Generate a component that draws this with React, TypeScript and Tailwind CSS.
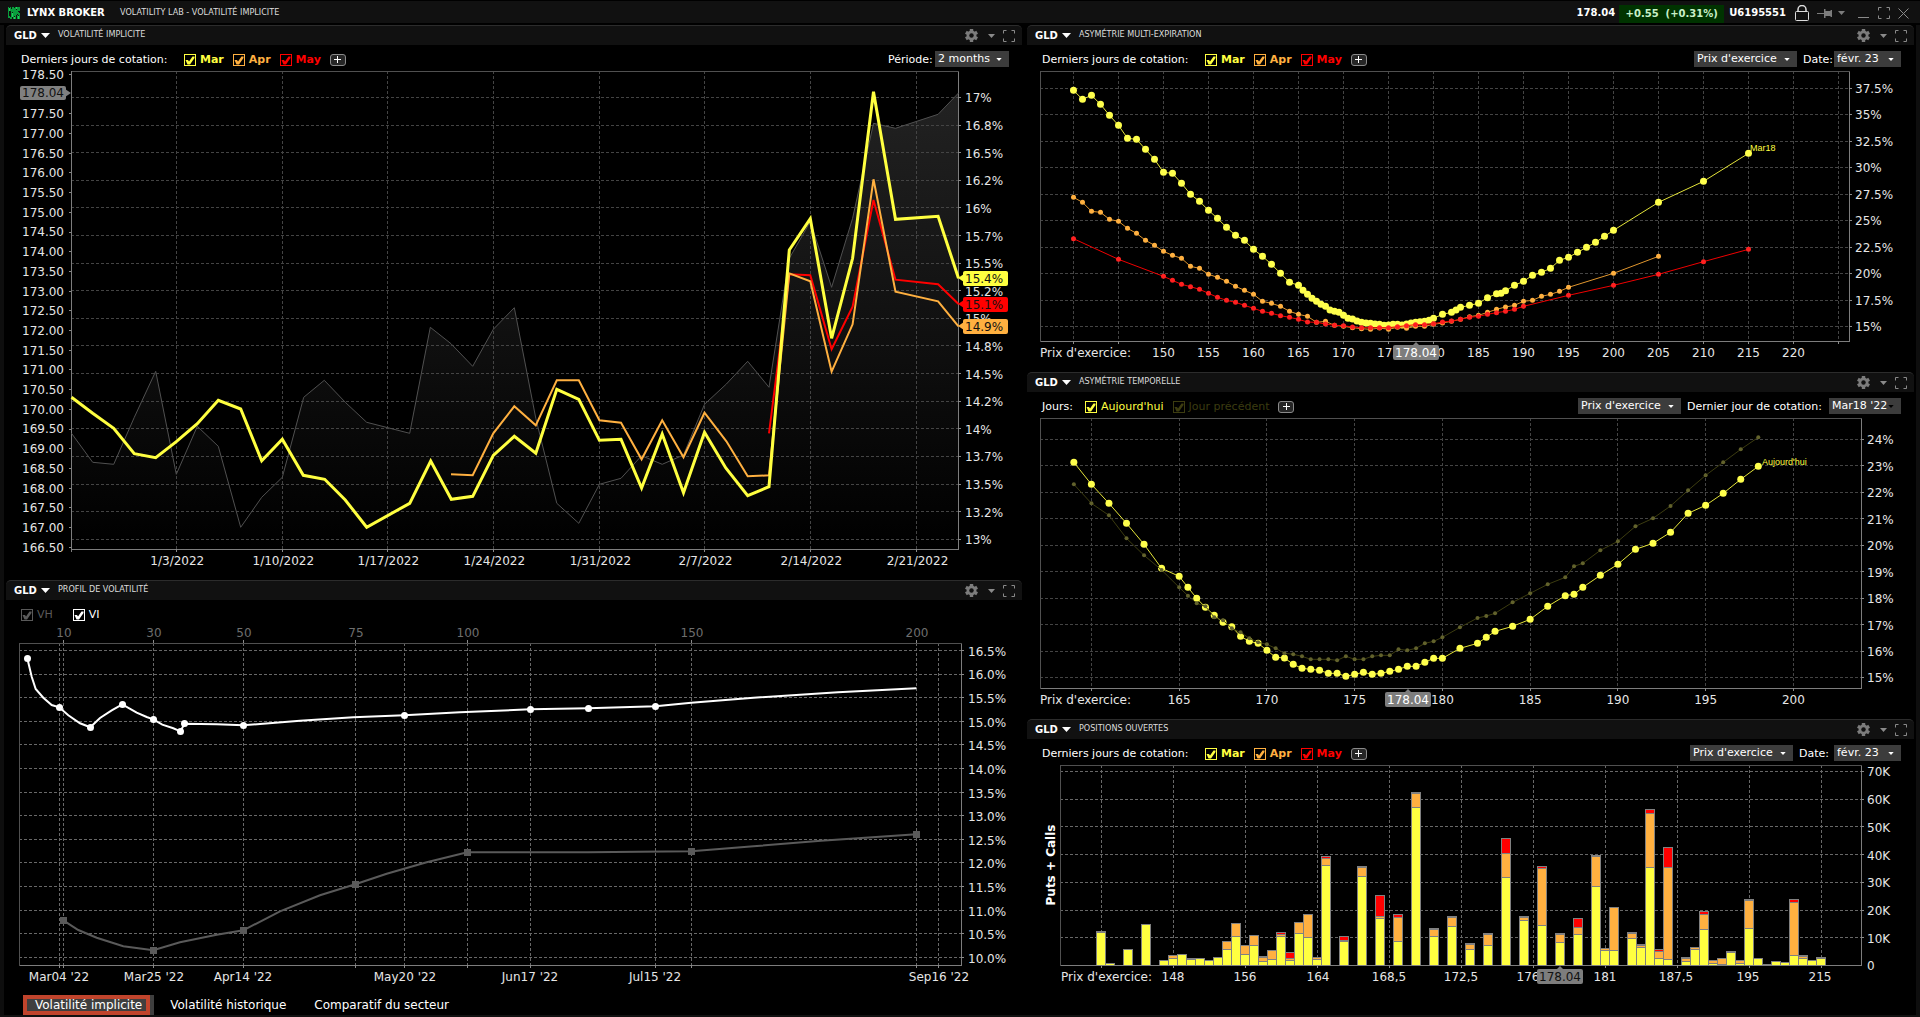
import React, { useState } from "react";

type Point = [number, number];

const YELLOW = "#ffff40";
const ORANGE = "#ffb040";
const RED = "#ff0000";

// DATA ------------------------------------------------------
// Chart coordinates share one canvas, see the viewBox of every chart.

const ivMar: Point[] = [
  [71.5, 397.3], [92.7, 413.3], [113.7, 428.3], [134.3, 453.7], [155.7, 457.7],
  [176.3, 441.7], [197.3, 423.7], [218.3, 400.3], [240.7, 409], [261.7, 460.7],
  [282.3, 439.3], [303.3, 475.3], [324.7, 479.3], [345.3, 500], [366.7, 527.3],
  [409.7, 503.3], [430.7, 461], [451.3, 499.3], [472.7, 496.3], [493.3, 455.3],
  [514.3, 436.3], [535.8, 453.3], [556.8, 389.3], [578.8, 399.3], [599.4, 440.3],
  [621, 439.3], [641.6, 488], [662.2, 434], [683.5, 492.7], [704.5, 432.3],
  [725.8, 468], [747.7, 495.7], [769, 486.7], [789.3, 250], [810.3, 218.7],
  [831.6, 338.3], [852.6, 258.3], [873.5, 91.7], [895.5, 219.3], [938.1, 216.3],
  [958.5, 278.3],
];

const ivApr: Point[] = [
  [451, 474.3], [472.7, 475.3], [493.3, 433.3], [514.3, 406.3], [535.8, 425.3],
  [556.8, 380.3], [578.8, 380.3], [599.4, 420.3], [621, 422.7], [641.6, 459.3],
  [662.2, 420.3], [683.5, 457.3], [704.5, 412.7], [726.4, 441.3], [747.7, 476.3],
  [769, 475.3], [789.3, 273.3], [810.3, 281.3], [831.6, 371.7], [852.6, 324.3],
  [873.5, 179.3], [895.5, 291.7], [938.1, 301.3], [958.5, 326.3],
];

const ivMay: Point[] = [
  [769, 433.3], [789.3, 274.3], [810.3, 275.3], [831.6, 349.3], [852.6, 306.7],
  [873.5, 200], [895.5, 279.7], [938.1, 284.3], [958.5, 304],
];

const price: Point[] = [
  [71.5, 433.3], [92.7, 462.3], [113.7, 464.3], [134.3, 417.3], [155.7, 371.3],
  [176.3, 474.3], [197.3, 426.3], [218.3, 446.3], [240.7, 527.3], [261.7, 497.3],
  [282.3, 477.3], [303.7, 397.3], [324.3, 380.3], [345.7, 402.7], [366.7, 422.3],
  [409.7, 433.3], [430.3, 327.3], [451, 343.7], [472.7, 366.3], [493.3, 329.3],
  [514.3, 307.7], [535.8, 418.3], [556.8, 503.3], [578.8, 523.3], [599.4, 484.3],
  [621, 478.3], [641.6, 455.7], [662.2, 464.3], [683.5, 455], [704.5, 404.3],
  [726.4, 384], [747.7, 361.3], [769, 387.3], [789.3, 258.3], [810.3, 221.7],
  [831.6, 287.3], [852.6, 218.3], [873.5, 123.3], [895.5, 128.3], [938.1, 114.3],
  [958.5, 93],
];

const profileIv: Point[] = [
  [27.3, 658.3], [31.7, 676.7], [35.7, 689], [43.3, 697.7], [51.7, 705],
  [59.3, 707.3], [68.3, 715.3], [80, 723.3], [90.3, 727.3], [100, 718],
  [111.7, 710.3], [122.3, 704.3], [136.7, 712.7], [146.7, 717], [153.3, 719.3],
  [162.3, 724.7], [173.3, 728.3], [180.3, 731.3], [184.7, 723.7], [216.7, 724.3],
  [243.3, 725.3], [300, 720.7], [353.3, 717.3], [404.3, 715.3], [460, 712.3],
  [530.4, 709.3], [588.2, 708.3], [655.5, 706.3], [691.3, 702.7], [753.5, 697.7],
  [838, 692.3], [916.4, 688.3],
];

const profileIvDots: Point[] = [
  [27.5, 658.5], [59.5, 707.5], [90.5, 727.5], [122.5, 704.5], [153.5, 719.5],
  [180.5, 731.5], [184.5, 723.5], [243.5, 725.5], [404.5, 715.5], [530.5, 709.5],
  [588.5, 708.5], [655.5, 706.5],
];

const profileHv: Point[] = [
  [63.3, 920.3], [78.3, 930], [96.7, 937.7], [123.3, 946.3], [153.3, 950.3],
  [180, 942.3], [216.7, 934.7], [243.3, 930.3], [280, 911.3], [320, 895.3],
  [355.3, 884.3], [386.7, 873.7], [426.7, 862.3], [467.3, 852.3], [588, 852.3],
  [691.3, 851.3], [753.5, 846.3], [821, 840.7], [916.4, 834.3],
];

const profileHvDots: Point[] = [
  [63, 920], [153, 950], [243, 930], [355, 884], [467, 852], [691, 851], [916, 834],
];

// [strike, height in thirds of a unit]
const range = (from: number, step: number, ys: number[]): Point[] =>
  ys.map((y, i) => [from + i * step, y]);

const skewMar: Point[] = [
  ...range(140, 1, [
    271, 298, 286, 313, 346, 376, 415, 418, 448, 478, 517, 520, 550, 583, 604,
    631, 655, 682, 706, 721, 748, 769, 793, 820, 847,
  ]),
  ...range(165, 0.5, [
    856, 871, 883, 895, 904, 913, 919, 930, 934, 937, 946, 955, 957, 963, 967,
    969, 970, 972, 973, 976, 975, 973, 973, 975, 972, 969, 967, 965, 964, 961,
    955,
  ]),
  [181, 943], [182, 937], [182.5, 930], [183, 922], [184, 916], [185, 910],
  [186, 893], [187, 881], [187.5, 880], [188, 872],
  ...range(189, 1, [856, 844, 826, 817, 805, 781, 772, 757, 742, 727, 709, 691]),
  [205, 607], [210, 544], [215, 460],
];

const skewApr: Point[] = [
  ...range(140, 1, [
    592, 607, 634, 637, 658, 664, 685, 700, 721, 736, 754, 766, 775, 799, 805,
    823, 832, 844, 859, 871, 883, 904, 910, 919, 934, 943, 949, 967, 964, 976,
    979, 983, 986, 988, 984, 988, 982, 985, 979, 979, 973, 969, 964, 958, 950,
    946, 937, 928, 921, 916, 904, 901, 889, 883, 874, 862,
  ]),
  [200, 820], [205, 769],
];

const skewMay: Point[] = [
  [140, 716], [145, 778],
  ...range(150, 1, [
    829, 841, 853, 860, 868, 880, 892, 901, 907, 916, 925, 934, 940, 947, 952,
    958, 966, 967, 972, 976, 977, 981, 983, 983, 983, 983, 980, 977, 974, 974,
    971, 966, 963, 958, 952, 949, 943, 938, 934, 928, 919,
  ]),
  [195, 886], [200, 856], [205, 823], [210, 785], [215, 748],
];

const today: Point[] = [
  ...range(159, 1, [277, 343, 400, 460, 523, 595]),
  ...range(165, 0.5, [
    619, 652, 685, 712, 736, 757, 770, 799, 814, 820, 841, 862, 864, 883, 895,
    898, 901, 910, 910, 919, 913, 907, 913, 910, 904, 898, 889, 889, 877, 865,
    865,
  ]),
  [181, 835], [182, 820], [182.5, 802], [183, 784], [184, 769], [185, 748],
  [186, 709], [187, 677], [187.5, 673],
  ...range(188, 1, [652, 616, 583, 538, 520, 487, 430, 406, 370, 328, 289]),
];

const previousDay: Point[] = [
  ...range(159, 1, [343, 400, 436, 505, 556, 600]),
  ...range(165, 0.5, [
    652, 677, 700, 709, 742, 751, 775, 787, 805, 817, 823, 835, 850, 853, 859,
    868, 868, 868, 871, 859, 868, 868, 859, 856, 856, 838, 841, 835, 820, 814,
    802,
  ]),
  [181, 772], [182, 744], [182.5, 738], [183, 730], [184, 697], [185, 670],
  [186, 643], [187, 622], [187.5, 589],
  ...range(188, 1, [580, 541, 514, 469, 445, 408, 361, 316, 277, 238, 202]),
];

// [slot, top of Mar, top of Apr, top of May]
const openInterest: number[][] = [
  [0, 668, 664], [1, 761], [2, 765], [3, 718], [4, 765], [5, 643], [6, 765],
  [7, 752], [8, 745, 736], [9, 734], [10, 748, 745], [11, 746], [12, 752],
  [13, 742], [14, 718, 694], [15, 680, 640], [16, 734, 706], [17, 706, 676],
  [18, 754, 742, 739], [19, 748, 721], [20, 680, 674, 667], [21, 752, 745, 727],
  [22, 670, 637], [23, 682, 613], [24, 748, 741], [25, 466, 445, 439],
  [27, 695, 691, 679], [29, 499, 472, 469], [31, 625, 619, 556],
  [33, 694, 622, 613], [35, 292, 250, 247], [37, 679, 658, 655],
  [39, 649, 622, 619], [40, 765], [41, 718, 703, 700], [43, 706, 673, 670],
  [45, 502, 430, 385], [47, 631, 622, 619], [49, 646, 475, 469], [50, 765],
  [51, 697, 673, 670], [53, 673, 652, 625], [55, 529, 439, 436], [56, 721, 715],
  [57, 721, 592], [59, 685, 670, 667], [60, 712, 706, 703], [61, 472, 310, 298],
  [62, 745, 724, 718], [63, 748, 472, 412], [65, 754, 745, 742], [66, 718, 712],
  [67, 658, 613, 604], [68, 760, 752], [69, 763, 745], [70, 727, 724],
  [71, 760, 752], [72, 655, 571, 568], [73, 745], [74, 764], [75, 755],
  [76, 758], [77, 736, 577, 568], [78, 745, 739, 736], [79, 752], [80, 745, 742],
];

const steps = (from: number, step: number, count: number) =>
  Array.from({ length: count }, (_, i) => from + i * step);

const toPoints = (points: Point[]) => points.map((p) => p.join(",")).join(" ");

// ICONS -----------------------------------------------------

const Caret = ({ className }: { className: string }) => (
  <svg viewBox="0 0 9 5" className={className} aria-hidden="true">
    <path d="M0 0h9L4.5 5z" fill="currentColor" />
  </svg>
);

const Gear = () => (
  <svg viewBox="0 0 13 13" className="h-[13px] w-[13px]" aria-hidden="true">
    <g fill="#7c7c7c">
      <rect x="4.8" y="0" width="3.4" height="13" />
      <rect x="4.8" y="0" width="3.4" height="13" transform="rotate(60 6.5 6.5)" />
      <rect x="4.8" y="0" width="3.4" height="13" transform="rotate(120 6.5 6.5)" />
      <circle cx="6.5" cy="6.5" r="4.9" />
    </g>
    <circle cx="6.5" cy="6.5" r="2.2" fill="#111" />
  </svg>
);

const Expand = () => (
  <svg viewBox="0 0 12 12" className="h-3 w-3" aria-hidden="true">
    <path
      d="M.5 3.5v-3h3M8.500.5h3v3M11.500 8.500v3h-3M3.500 11.500h-3v-3"
      fill="none"
      stroke="#8a8a8a"
    />
  </svg>
);

const Logo = () => (
  <svg viewBox="0 0 12 12" className="h-3 w-3" shapeRendering="crispEdges" aria-hidden="true">
    <path
      fill="#0a9c3c"
      d="M0 0h1v9h1v2H0zM2 0h1v4H2zM3 2h1v8H3zM4 0h2v5H4zM5 5h1v7H5zM6 1h1v8H6zM7 0h1v12H7zM8 3h1v5H8zM9 0h1v7H9zM10 0h2v4h-2zM9 8h1v4H9zM11 6h1v6h-1zM2 10h2v2H2zM10 5h1v3h-1z"
    />
    <path fill="#1fd45c" d="M4 6h1v4H4zM8 0h1v2H8zM10 9h1v3h-1zM6 10h1v2H6zM1 1h1v3H1z" />
  </svg>
);

// CONTROLS --------------------------------------------------

type CheckProps = {
  label: string;
  color: string;
  bold?: boolean;
};

const Check = ({ label, color, bold }: CheckProps) => {
  const [checked, setChecked] = useState(true);

  return (
    <label className={`flex items-center gap-1 ${color} ${bold ? "font-bold" : ""}`}>
      <span className="relative block h-3 w-3">
        <input
          type="checkbox"
          checked={checked}
          onChange={(e) => setChecked(e.target.checked)}
          className="block h-3 w-3 appearance-none border border-current"
        />
        {checked && (
          <svg viewBox="0 0 12 12" className="pointer-events-none absolute inset-0" aria-hidden="true">
            <path d="M1.500 6H4l1 1.500L8.500 2.500h2V4L6 10.500H3.500z" fill="currentColor" />
          </svg>
        )}
      </span>
      {label}
    </label>
  );
};

const AddButton = () => (
  <button
    type="button"
    aria-label="Ajouter"
    className="flex h-3 w-4 items-center justify-center rounded-[3px] border border-[#8a8a8a] bg-[#262626]"
  >
    <svg viewBox="0 0 7 7" className="h-[7px] w-[7px]" aria-hidden="true">
      <path d="M3.500 0v7M0 3.500h7" stroke="#fff" />
    </svg>
  </button>
);

const TradingDays = () => (
  <>
    <span className="min-w-[154px]">Derniers jours de cotation:</span>
    <Check label="Mar" color="text-[#ffff40]" bold />
    <Check label="Apr" color="text-[#ffb040]" bold />
    <Check label="May" color="text-[#ff0000]" bold />
    <AddButton />
  </>
);

type DropdownProps = {
  value: string;
  width: string;
  label?: string;
  labelWidth?: string;
  caret?: string;
};

const Dropdown = ({ value, width, label, labelWidth = "", caret = "text-white" }: DropdownProps) => (
  <label className="flex items-center">
    {label && <span className={labelWidth}>{label}</span>}
    <span className="relative block">
      <select
        aria-label={label ?? value}
        className={`block h-4 appearance-none bg-[#3c3c3c] pl-[3px] text-[11px] leading-4 text-white ${width}`}
      >
        <option>{value}</option>
      </select>
      <Caret className={`pointer-events-none absolute top-[7px] right-[7px] h-[3px] w-[6px] ${caret}`} />
    </span>
  </label>
);

type PanelProps = {
  title: string;
  left: React.ReactNode;
  right?: React.ReactNode;
  children: React.ReactNode;
};

const Panel = ({ title, left, right, children }: PanelProps) => (
  <section>
    <header className="flex h-5 items-center rounded-t-[5px] border-t border-[#2c2c2c] bg-[#111] pr-[7px] pl-2">
      <button type="button" className="flex items-center gap-1 text-[10px] font-bold">
        GLD
        <Caret className="h-[5px] w-[9px]" />
      </button>
      <h2 className="ml-2 flex-1 pb-[2px] font-['DejaVu_Sans_Condensed','Noto_Sans',sans-serif] text-[9px] text-[#ddd]">
        {title}
      </h2>
      <div className="flex items-center text-[#8a8a8a]">
        <button type="button" aria-label="Configurer">
          <Gear />
        </button>
        <button type="button" aria-label="Menu" className="ml-[10px]">
          <Caret className="h-1 w-[7px]" />
        </button>
        <button type="button" aria-label="Agrandir" className="ml-2">
          <Expand />
        </button>
      </div>
    </header>
    <div className="flex h-[26px] items-center justify-between pt-[3px] pr-[13px] pl-[15px] text-[11px]">
      <div className="flex items-center gap-[9px]">{left}</div>
      <div className="flex items-center gap-[6px] pb-px">{right}</div>
    </div>
    {children}
  </section>
);

// CHART PARTS -----------------------------------------------

type TextProps = {
  x: number;
  y: number;
  children: React.ReactNode;
  anchor?: "start" | "middle" | "end";
  fill?: string;
};

// y is the middle of the digits
const Label = ({ x, y, children, anchor = "middle", fill = "#e6e6e6" }: TextProps) => (
  <text x={x} y={Math.round(y + 4.4)} textAnchor={anchor} fill={fill} className="text-[12px]">
    {children}
  </text>
);

type FrameProps = {
  x1: number;
  y1: number;
  x2: number;
  y2: number;
  xs: number[];
  ys: number[];
  stroke?: string;
};

const px = (n: number) => Math.floor(n) + 0.5;

const Frame = ({ x1, y1, x2, y2, xs, ys, stroke = "#444" }: FrameProps) => (
  <g shapeRendering="crispEdges" fill="none">
    <g stroke={stroke} strokeDasharray="3 2">
      {xs.map((x) => (
        <line key={x} x1={px(x)} x2={px(x)} y1={y1} y2={y2} />
      ))}
      {ys.map((y) => (
        <line key={y} x1={x1} x2={x2} y1={px(y)} y2={px(y)} />
      ))}
    </g>
    <path d={`M${px(x1)} ${px(y2)}V${px(y1)}H${px(x2)}`} stroke="#505050" />
    <path d={`M${px(x1)} ${px(y2)}H${px(x2)}V${px(y1)}`} stroke="#7d7d7d" />
    <g stroke="#8a8a8a">
      {xs.map((x) => (
        <line key={x} x1={px(x)} x2={px(x)} y1={y2} y2={y2 + 3} />
      ))}
      {ys.map((y) => (
        <line key={y} x1={x2} x2={x2 + 3} y1={px(y)} y2={px(y)} />
      ))}
    </g>
  </g>
);

const PriceTag = ({ x, y, fill = "#fff" }: { x: number; y: number; fill?: string }) => (
  <g>
    <path d={`M${x - 4} ${y + 4}l4 -4l4 4z`} fill="#7d7d7d" />
    <rect x={x - 23} y={y + 3} width="46" height="15" rx="2" fill="#7d7d7d" />
    <Label x={x} y={y + 11} fill={fill}>
      178.04
    </Label>
  </g>
);

type CurveProps = {
  points: Point[];
  stroke: string;
  fill: string;
  r: number;
};

const Curve = ({ points, stroke, fill, r }: CurveProps) => (
  <g>
    <polyline points={toPoints(points)} fill="none" stroke={stroke} />
    {points.map(([x, y]) => (
      <circle key={x} cx={x} cy={y} r={r} fill={fill} />
    ))}
  </g>
);

// CHARTS ----------------------------------------------------

const ImpliedVolatilityChart = () => {
  const xs = [176.3, 282.3, 387.3, 493.3, 599.4, 704.5, 810.3, 916.5];
  const dates = ["1/3/2022", "1/10/2022", "1/17/2022", "1/24/2022", "1/31/2022", "2/7/2022", "2/14/2022", "2/21/2022"];
  const ys = steps(97.4, 27.62, 17);
  const vols = ["17", "16.8", "16.5", "16.2", "16", "15.7", "15.5", "15.2", "15", "14.8", "14.5", "14.2", "14", "13.7", "13.5", "13.2", "13"];
  const prices = steps(178.5, -0.5, 25).filter((p) => p !== 178);
  const priceY = (p: number) => 74.4 + (178.5 - p) * 39.4;
  const tags = [
    { y: 278, text: "15.4%", color: YELLOW },
    { y: 304, text: "15.1%", color: RED },
    { y: 326, text: "14.9%", color: ORANGE },
  ];

  return (
    <svg viewBox="6 71 1016 509" className="block w-full overflow-visible">
      <defs>
        <linearGradient id="price-fill" gradientUnits="userSpaceOnUse" x1="0" y1="93" x2="0" y2="549">
          <stop offset="0" stopColor="#222" />
          <stop offset="0.85" stopColor="#050505" />
          <stop offset="1" stopColor="#000" />
        </linearGradient>
      </defs>
      <polygon points={`71.5,549 ${toPoints(price)} 958.5,549`} fill="url(#price-fill)" />
      <Frame x1={71} y1={71} x2={958} y2={549} xs={xs} ys={ys} />
      <line x1="71.5" x2="71.5" y1="71" y2="552" stroke="#7d7d7d" shapeRendering="crispEdges" />
      {prices.map((p) => (
        <g key={p}>
          <line x1="69" x2="71" y1={px(priceY(p))} y2={px(priceY(p))} stroke="#8a8a8a" shapeRendering="crispEdges" />
          <Label x={64} y={priceY(p)} anchor="end">
            {p.toFixed(2)}
          </Label>
        </g>
      ))}
      <rect x="20" y="86" width="46" height="14" rx="2" fill="#808080" />
      <path d="M65 89l6 4l-6 4z" fill="#808080" />
      <Label x={64} y={93} anchor="end" fill="#111">
        178.04
      </Label>
      {ys.map((y, i) => (
        <Label key={y} x={965} y={y + 0.6} anchor="start">
          {vols[i]}%
        </Label>
      ))}
      {xs.map((x, i) => (
        <Label key={x} x={x + 1} y={560.6}>
          {dates[i]}
        </Label>
      ))}
      <polyline points={toPoints(price)} fill="none" stroke="#505050" />
      <polyline points={toPoints(ivMay)} fill="none" stroke={RED} strokeWidth="2" />
      <polyline points={toPoints(ivApr)} fill="none" stroke={ORANGE} strokeWidth="2" />
      <polyline points={toPoints(ivMar)} fill="none" stroke={YELLOW} strokeWidth="3" />
      {tags.map((tag) => (
        <g key={tag.text}>
          <path d={`M958 ${tag.y}l6 -4v8z`} fill={tag.color} />
          <rect x="963" y={tag.y - 7} width="45" height="15" rx="2" fill={tag.color} />
          <Label x={965} y={tag.y + 0.8} anchor="start" fill="#111">
            {tag.text}
          </Label>
        </g>
      ))}
    </svg>
  );
};

const ProfileChart = () => {
  const xs = [59, 63, 153, 243, 355, 404, 467, 530, 655, 691, 916, 938];
  const ys = steps(650.4, 23.62, 14);
  const days: Point[] = [[10, 64], [30, 154], [50, 244], [75, 356], [100, 468], [150, 692], [200, 917]];
  const dates: [string, number][] = [
    ["Mar04 '22", 59],
    ["Mar25 '22", 154],
    ["Apr14 '22", 243],
    ["May20 '22", 405],
    ["Jun17 '22", 530],
    ["Jul15 '22", 655],
    ["Sep16 '22", 939],
  ];

  return (
    <svg viewBox="6 626 1016 369" className="block w-full">
      <Frame x1={19} y1={643} x2={961} y2={965} xs={xs} ys={ys} stroke="#686868" />
      {days.map(([day, x]) => (
        <g key={day}>
          <line x1={px(x - 1)} x2={px(x - 1)} y1="640" y2="643" stroke="#8a8a8a" shapeRendering="crispEdges" />
          <Label x={x} y={632.6} fill="#6e6e6e">
            {day}
          </Label>
        </g>
      ))}
      {ys.map((y, i) => (
        <Label key={y} x={968} y={y + 1} anchor="start">
          {(16.5 - i * 0.5).toFixed(1)}%
        </Label>
      ))}
      {dates.map(([date, x]) => (
        <Label key={date} x={x} y={976.6}>
          {date}
        </Label>
      ))}
      <polyline points={toPoints(profileHv)} fill="none" stroke="#5a5a5a" strokeWidth="2" />
      {profileHvDots.map(([x, y]) => (
        <rect key={x} x={x - 3} y={y - 3} width="7" height="7" fill="#5a5a5a" />
      ))}
      <polyline points={toPoints(profileIv)} fill="none" stroke="#fff" strokeWidth="2" />
      {profileIvDots.map(([x, y]) => (
        <circle key={x} cx={x} cy={y} r="3.5" fill="#fff" />
      ))}
    </svg>
  );
};

const SkewChart = () => {
  const x = (strike: number) => 1073.5 + (strike - 140) * 9;
  const scale = (points: Point[]) => points.map(([s, y]): Point => [x(s), y / 3]);
  const ys = steps(88.4, 26.45, 10);

  return (
    <svg viewBox="1027 71 887 301" className="block w-full">
      <Frame x1={1040} y1={71} x2={1849} y2={341} xs={steps(140, 5, 18).map(x)} ys={ys} />
      {ys.map((y, i) => (
        <Label key={y} x={1855} y={y + 0.2} anchor="start">
          {37.5 - i * 2.5}%
        </Label>
      ))}
      <Label x={1040} y={352.6} anchor="start">
        Prix d'exercice:
      </Label>
      {steps(150, 5, 15).map((s) => (
        <Label key={s} x={x(s)} y={352.6}>
          {s}
        </Label>
      ))}
      <PriceTag x={1416} y={342} />
      <Curve points={scale(skewMar)} stroke="#e4e43a" fill="#ffff4c" r={3.5} />
      <Curve points={scale(skewApr)} stroke="#e0962e" fill={ORANGE} r={2.5} />
      <Curve points={scale(skewMay)} stroke="#f00000" fill="#ff2020" r={2.5} />
      <text x="1750" y="151" fill={YELLOW} className="font-['Liberation_Sans',sans-serif] text-[9px]">
        Mar18
      </text>
    </svg>
  );
};

const TemporalSkewChart = () => {
  const x = (strike: number) => 1091.4 + (strike - 160) * 17.55;
  const scale = (points: Point[]) => points.map(([s, y]): Point => [x(s), 370 + y / 3]);
  const ys = steps(439.4, 26.45, 10);
  const previous = scale(previousDay);

  return (
    <svg viewBox="1027 418 887 301" className="block w-full">
      <Frame x1={1040} y1={418} x2={1861} y2={688} xs={steps(160, 5, 9).map(x)} ys={ys} />
      {ys.map((y, i) => (
        <Label key={y} x={1867} y={y + 0.6} anchor="start">
          {24 - i}%
        </Label>
      ))}
      <Label x={1040} y={699.6} anchor="start">
        Prix d'exercice:
      </Label>
      {steps(165, 5, 8).map((s) => (
        <Label key={s} x={x(s)} y={699.6}>
          {s}
        </Label>
      ))}
      <PriceTag x={1408} y={689} />
      <Curve points={scale(today)} stroke="#e4e43a" fill="#ffff4c" r={3.5} />
      <polyline points={toPoints(previous)} fill="none" stroke="#3c3c10" />
      {previous.map(([cx, cy]) => (
        <circle key={cx} cx={cx} cy={cy} r="2" fill="#62622c" />
      ))}
      <text x="1762" y="465" fill={YELLOW} className="font-['Liberation_Sans',sans-serif] text-[9px]">
        Aujourd'hui
      </text>
    </svg>
  );
};

const OpenInterestChart = () => {
  const ys = steps(771.4, 27.72, 8);
  const base = 965.5;
  const strikes: [string, number][] = [
    ["148", 1173],
    ["156", 1245],
    ["164", 1318],
    ["168,5", 1389],
    ["172,5", 1461],
    ["176", 1528],
    ["181", 1605],
    ["187,5", 1676],
    ["195", 1748],
    ["215", 1820],
  ];
  const fills = [YELLOW, ORANGE, RED];

  return (
    <svg viewBox="1027 765 887 250" className="block w-full">
      <Frame x1={1060} y1={765} x2={1861} y2={965} xs={steps(1101, 72, 11)} ys={ys.slice(0, 7)} stroke="#686868" />
      <text
        x="1055"
        y="865"
        textAnchor="middle"
        transform="rotate(-90 1055 865)"
        fill="#fff"
        className="text-[12px] font-bold"
      >
        Puts + Calls
      </text>
      {ys.map((y, i) => (
        <Label key={y} x={1867} y={y + 0.6} anchor="start">
          {i === 7 ? "0" : `${70 - i * 10}K`}
        </Label>
      ))}
      <Label x={1061} y={976.6} anchor="start">
        Prix d'exercice:
      </Label>
      {strikes.map(([strike, x]) => (
        <Label key={strike} x={x} y={976.6}>
          {strike}
        </Label>
      ))}
      <g stroke="#808080" shapeRendering="crispEdges">
        {openInterest.map(([slot, ...tops]) =>
          tops.map((top, i) => {
            const y = 710 + top / 3;
            const bottom = i === 0 ? base : 710 + tops[i - 1] / 3;
            return <rect key={`${slot}-${i}`} x={1096.5 + slot * 9} y={y} width="9" height={bottom - y} fill={fills[i]} />;
          })
        )}
      </g>
      <PriceTag x={1560} y={966} fill="#111" />
    </svg>
  );
};

// PAGE ------------------------------------------------------

const TitleBar = () => (
  <header className="mt-px flex h-[22px] items-center bg-[#111] pt-[2px] pr-[11px] pl-2 text-[10px] font-bold">
    <Logo />
    <h1 className="ml-[7px] min-w-[80px]">LYNX BROKER</h1>
    <p className="ml-[13px] flex-1 pb-px font-['DejaVu_Sans_Condensed','Noto_Sans',sans-serif] text-[9px] font-normal text-[#ddd]">
      VOLATILITY LAB - VOLATILITÉ IMPLICITE
    </p>
    <span>178.04</span>
    <span className="ml-1 flex h-[18px] min-w-[105px] items-center justify-center self-end bg-[#003300] whitespace-pre text-[#c8f0c8]">
      {"+0.55  (+0.31%)"}
    </span>
    <span className="ml-[5px]">U6195551</span>
    <svg viewBox="0 0 14 16" className="ml-[9px] h-4 w-[14px]" fill="none" stroke="#ddd" aria-hidden="true">
      <rect x=".5" y="6.500" width="13" height="9" rx="1" />
      <path d="M3 6.500V4.500a4 4 0 0 1 8 0v2" strokeWidth="1.500" />
    </svg>
    <button type="button" aria-label="Épingler" className="ml-2 flex items-center gap-[5px] text-[#7c7c7c]">
      <svg viewBox="0 0 16 9" className="h-[9px] w-4" aria-hidden="true">
        <path d="M0 4h7v1H0zM7 0h1.500v9H7zM8.500 2h5v5h-5zM13.500 1H15v7h-1.500z" fill="currentColor" />
      </svg>
      <Caret className="h-1 w-[7px]" />
    </button>
    <button type="button" aria-label="Réduire" className="ml-[13px] self-end pb-[5px]">
      <span className="block h-px w-[11px] bg-[#8a8a8a]" />
    </button>
    <button type="button" aria-label="Agrandir" className="ml-[9px]">
      <Expand />
    </button>
    <button type="button" aria-label="Fermer" className="ml-2">
      <svg viewBox="0 0 11 11" className="h-[11px] w-[11px]" aria-hidden="true">
        <path d="M.5.5l10 10M10.500.5l-10 10" stroke="#8a8a8a" />
      </svg>
    </button>
  </header>
);

const Tabs = () => {
  const [active, setActive] = useState("Volatilité implicite");
  const tabs = ["Volatilité implicite", "Volatilité historique", "Comparatif du secteur"];

  return (
    <nav className="ml-[17px] flex gap-1 text-[12px]">
      {tabs.map((tab) => (
        <button
          key={tab}
          type="button"
          onClick={() => setActive(tab)}
          className={`relative h-5 px-3 ${active === tab ? "bg-[#3f3f3f]" : ""}`}
        >
          {tab}
          {active === tab && <span className="absolute inset-y-0 right-1 left-0 border-4 border-[#c0442c]" />}
        </button>
      ))}
    </nav>
  );
};

export default function App() {
  return (
    <div className="min-h-screen overflow-hidden border-b-2 border-[#111] bg-black font-['DejaVu_Sans',Verdana,sans-serif] leading-none text-white">
      <TitleBar />
      <main className="mt-[2px] grid grid-cols-[1016fr_887fr] gap-x-[5px] border-x-4 border-[#0e0e0e] px-[2px]">
        <div>
          <Panel
            title="VOLATILITÉ IMPLICITE"
            left={<TradingDays />}
            right={<Dropdown label="Période:" labelWidth="min-w-[47px]" value="2 months" width="w-[74px]" />}
          >
            <ImpliedVolatilityChart />
          </Panel>
          <Panel
            title="PROFIL DE VOLATILITÉ"
            left={
              <div className="flex gap-5">
                <Check label="VH" color="text-[#5a5a5a]" />
                <Check label="VI" color="text-white" />
              </div>
            }
          >
            <ProfileChart />
          </Panel>
          <Tabs />
        </div>
        <div>
          <Panel
            title="ASYMÉTRIE MULTI-EXPIRATION"
            left={<TradingDays />}
            right={
              <>
                <Dropdown value="Prix d'exercice" width="w-[103px]" />
                <Dropdown label="Date:" labelWidth="min-w-[31px]" value="févr. 23" width="w-[67px]" />
              </>
            }
          >
            <SkewChart />
          </Panel>
          <Panel
            title="ASYMÉTRIE TEMPORELLE"
            left={
              <>
                <span className="min-w-[34px]">Jours:</span>
                <Check label="Aujourd'hui" color="text-[#ffff40]" />
                <Check label="Jour précédent" color="text-[#3c3c10]" />
                <AddButton />
              </>
            }
            right={
              <>
                <Dropdown value="Prix d'exercice" width="w-[103px]" />
                <Dropdown
                  label="Dernier jour de cotation:"
                  labelWidth="min-w-[142px]"
                  value="Mar18 '22"
                  width="w-[72px]"
                  caret="text-black"
                />
              </>
            }
          >
            <TemporalSkewChart />
          </Panel>
          <Panel
            title="POSITIONS OUVERTES"
            left={<TradingDays />}
            right={
              <>
                <Dropdown value="Prix d'exercice" width="w-[103px]" />
                <Dropdown label="Date:" labelWidth="min-w-[35px]" value="févr. 23" width="w-[67px]" />
              </>
            }
          >
            <OpenInterestChart />
          </Panel>
        </div>
      </main>
    </div>
  );
}
